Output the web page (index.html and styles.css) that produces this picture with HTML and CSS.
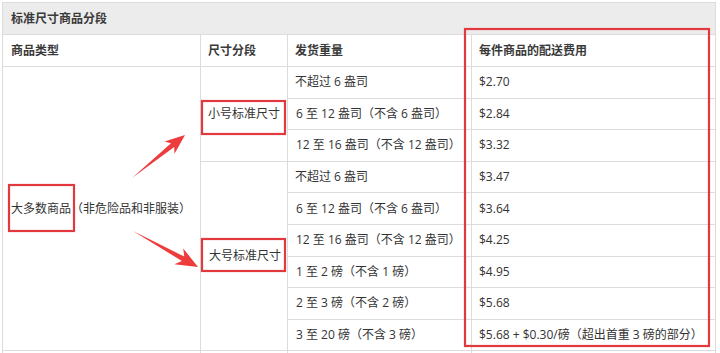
FILE: index.html
```html
<!DOCTYPE html>
<html lang="zh">
<head>
<meta charset="utf-8">
<link rel="stylesheet" href="styles.css">
</head>
<body>
<div class="page">
  <table class="fees">
    <colgroup>
      <col class="c1"><col class="c2"><col class="c3"><col class="c4">
    </colgroup>
    <tr class="title"><th colspan="4">标准尺寸商品分段</th></tr>
    <tr class="head"><th>商品类型</th><th>尺寸分段</th><th>发货重量</th><th>每件商品的配送费用</th></tr>
    <tr>
      <td rowspan="9" class="type">大多数商品（非危险品和非服装）</td>
      <td rowspan="3">小号标准尺寸</td>
      <td>不超过 6 盎司</td><td>$2.70</td>
    </tr>
    <tr><td>6 至 12 盎司（不含 6 盎司）</td><td>$2.84</td></tr>
    <tr><td>12 至 16 盎司（不含 12 盎司）</td><td>$3.32</td></tr>
    <tr>
      <td rowspan="6">大号标准尺寸</td>
      <td>不超过 6 盎司</td><td>$3.47</td>
    </tr>
    <tr><td>6 至 12 盎司（不含 6 盎司）</td><td>$3.64</td></tr>
    <tr><td>12 至 16 盎司（不含 12 盎司）</td><td>$4.25</td></tr>
    <tr><td>1 至 2 磅（不含 1 磅）</td><td>$4.95</td></tr>
    <tr><td>2 至 3 磅（不含 2 磅）</td><td>$5.68</td></tr>
    <tr><td>3 至 20 磅（不含 3 磅）</td><td>$5.68 + $0.30/磅（超出首重 3 磅的部分）</td></tr>
    <tr><td></td><td></td><td></td><td></td></tr>
  </table>
  <svg class="marks" width="720" height="353" viewBox="0 0 720 353">
    <g fill="none" stroke="#e2393e" stroke-width="2.2">
      <rect x="9" y="185" width="65" height="46"/>
      <rect x="202" y="101" width="83" height="33"/>
      <rect x="202" y="239" width="83" height="32"/>
      <rect x="465" y="29" width="244" height="317"/>
    </g>
    <g fill="#ee3b3b">
      <path d="M132,178 L171,143.2 L164.5,141.4 L185,135 L174.5,153.8 L174.2,147 Z"/>
      <path d="M133,231 L184.3,256.6 L183.2,248.4 L198,267 L174.4,264.2 L181.9,261 Z"/>
    </g>
  </svg>
</div>
</body>
</html>
```

FILE: styles.css
```css
html, body {
  margin: 0;
  padding: 0;
  background: #fff;
  overflow: hidden;
}
.page {
  position: relative;
  width: 720px;
  height: 353px;
  padding: 2px 0 0 2px;
  box-sizing: border-box;
  font-family: "Open Sans", "Noto Sans CJK SC", sans-serif;
  font-size: 12px;
  color: #333;
}
.fees {
  border-collapse: collapse;
  width: 713px;
  table-layout: fixed;
}
.c1 { width: 198px; }
.c2 { width: 87px; }
.c3 { width: 184px; }
.c4 { width: 244px; }
.fees th, .fees td {
  border: 1px solid #dcdcdc;
  padding: 0 7px 0 7px;
  text-align: left;
  vertical-align: middle;
  white-space: nowrap;
  line-height: 16px;
}
.fees td:first-child, .fees th:first-child { padding-left: 8px; }
.fees th { font-weight: bold; color: #3a3a3a; }
.title th {
  background: #ececec;
  height: 31px;
}
.head th { height: 31px; }
.fees td { height: 30.6px; }
.fees td.type { padding-left: 8px; }
.marks {
  position: absolute;
  left: 0;
  top: 0;
  pointer-events: none;
}
```
